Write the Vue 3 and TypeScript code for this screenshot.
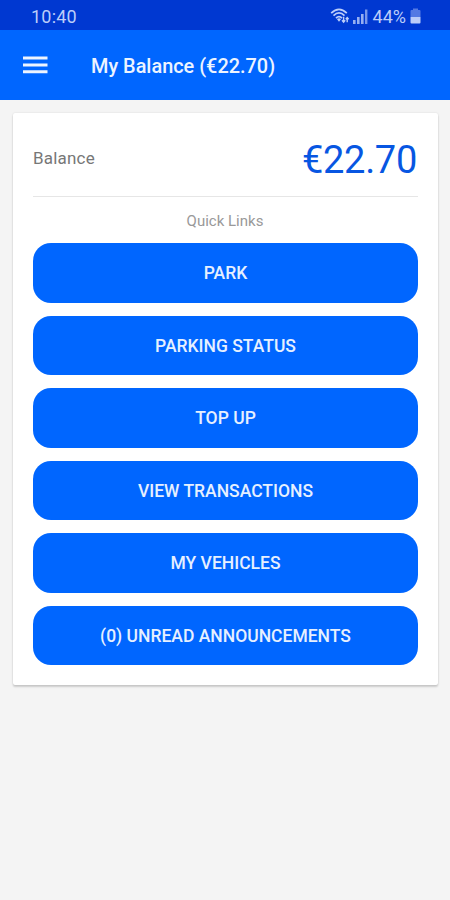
<script setup lang="ts">
const balance: string = '€22.70'
const links: string[] = [
  'PARK',
  'PARKING STATUS',
  'TOP UP',
  'VIEW TRANSACTIONS',
  'MY VEHICLES',
  '(0) UNREAD ANNOUNCEMENTS',
]
</script>

<template>
  <div class="screen">
    <div class="status">
      <span class="clock">10:40</span>
      <div class="indicators">
        <svg class="wifi" width="20" height="18" viewBox="0 0 20 18" fill="none" stroke="currentColor">
          <path d="M1.2 6.2Q9 -1.4 16.8 6.2M3.5 8.7Q9 3.2 14.5 8.7M6 11.1Q9 8 12 11.1" stroke-width="1.7" />
          <path d="M7 12.3Q9 10.4 11 12.3L9 14.8Z" fill="currentColor" stroke="none" />
          <path d="M13.6 9.8V15M12 13.3L13.6 15.1L15.2 13.3M17.2 15.2V10.8M15.8 12.3L17.2 10.6L18.6 12.3" stroke-width="1.4" />
        </svg>
        <svg class="signal" width="15" height="15" viewBox="0 0 15 15" fill="currentColor">
          <path d="M0 11h2.6v4H0zM4 8h2.6v7H4zM8 5h2.6v10H8z" opacity=".8" />
          <path d="M12 .5h2.4V15H12z" opacity=".65" />
        </svg>
        <span class="percent">44%</span>
        <svg class="battery" width="11" height="16" viewBox="0 0 11 16" fill="currentColor">
          <path d="M3 .5h5V2h1.5q1 0 1 1v6H.5V3q0-1 1-1H3z" opacity=".45" />
          <path d="M.5 9h10v5.5q0 1-1 1h-8q-1 0-1-1z" />
        </svg>
      </div>
    </div>
    <header class="bar">
      <button class="menu" aria-label="Menu">
        <svg width="25" height="18" viewBox="0 0 25 18" fill="currentColor">
          <path d="M0 .5h24.5v3H0zM0 7.4h24.5v3H0zM0 14.3h24.5v3H0z" />
        </svg>
      </button>
      <h1 class="title">My Balance ({{ balance }})</h1>
    </header>
    <main class="content">
      <section class="card">
        <div class="balance">
          <span class="label">Balance</span>
          <span class="amount">{{ balance }}</span>
        </div>
        <p class="caption">Quick Links</p>
        <nav class="links">
          <button v-for="link in links" :key="link" class="link">{{ link }}</button>
        </nav>
      </section>
    </main>
  </div>
</template>

<style>
body {
  margin: 0;
  background: #f4f4f4;
}
</style>

<style scoped>
.screen {
  box-sizing: border-box;
  width: 450px;
  height: 900px;
  overflow: hidden;
  background: #f4f4f4;
  font-family: Roboto, sans-serif;
}
button {
  border: 0;
  padding: 0;
  font: inherit;
  color: inherit;
}
svg {
  display: block;
}
.status {
  box-sizing: border-box;
  height: 30px;
  padding: 2px 29px 0 31px;
  display: flex;
  align-items: center;
  justify-content: space-between;
  background: #0038d1;
  color: #bccdf9;
  font-size: 18px;
}
.clock {
  letter-spacing: 0.2px;
}
.indicators {
  display: flex;
  align-items: center;
}
.signal {
  margin-left: 3px;
}
.percent {
  margin-left: 5px;
}
.battery {
  margin-left: 4px;
}
.bar {
  box-sizing: border-box;
  height: 70px;
  padding-left: 23px;
  display: flex;
  align-items: center;
  background: #0066ff;
  color: #edf4ff;
}
.menu {
  background: none;
}
.title {
  margin: 3px 0 0 43px;
  font-size: 19.9px;
  font-weight: 500;
  line-height: 24px;
}
.content {
  padding: 13px 12px 0 13px;
}
.card {
  box-sizing: border-box;
  height: 572px;
  padding: 0 20px;
  border-radius: 2px;
  background: #fff;
  box-shadow: 0 2px 2px rgba(0, 0, 0, 0.16), 0 0 2px rgba(0, 0, 0, 0.12);
}
.balance {
  box-sizing: border-box;
  height: 84px;
  padding: 11px 1px 0 0;
  display: flex;
  align-items: center;
  justify-content: space-between;
  border-bottom: 1px solid #e6e6e6;
}
.label {
  margin-top: -4px;
  color: #777;
  font-size: 17px;
  letter-spacing: 0.2px;
}
.amount {
  color: #0756e2;
  font-size: 38px;
  letter-spacing: -0.3px;
}
.caption {
  margin: 0;
  padding-right: 1px;
  height: 46px;
  line-height: 49px;
  text-align: center;
  color: #999;
  font-size: 15px;
}
.links {
  display: flex;
  flex-direction: column;
  gap: 13px;
}
.link {
  height: 59.5px;
  padding-top: 1px;
  border-radius: 18px;
  background: #0066ff;
  color: #e6f0ff;
  font-size: 17.5px;
  font-weight: 500;
}
</style>
